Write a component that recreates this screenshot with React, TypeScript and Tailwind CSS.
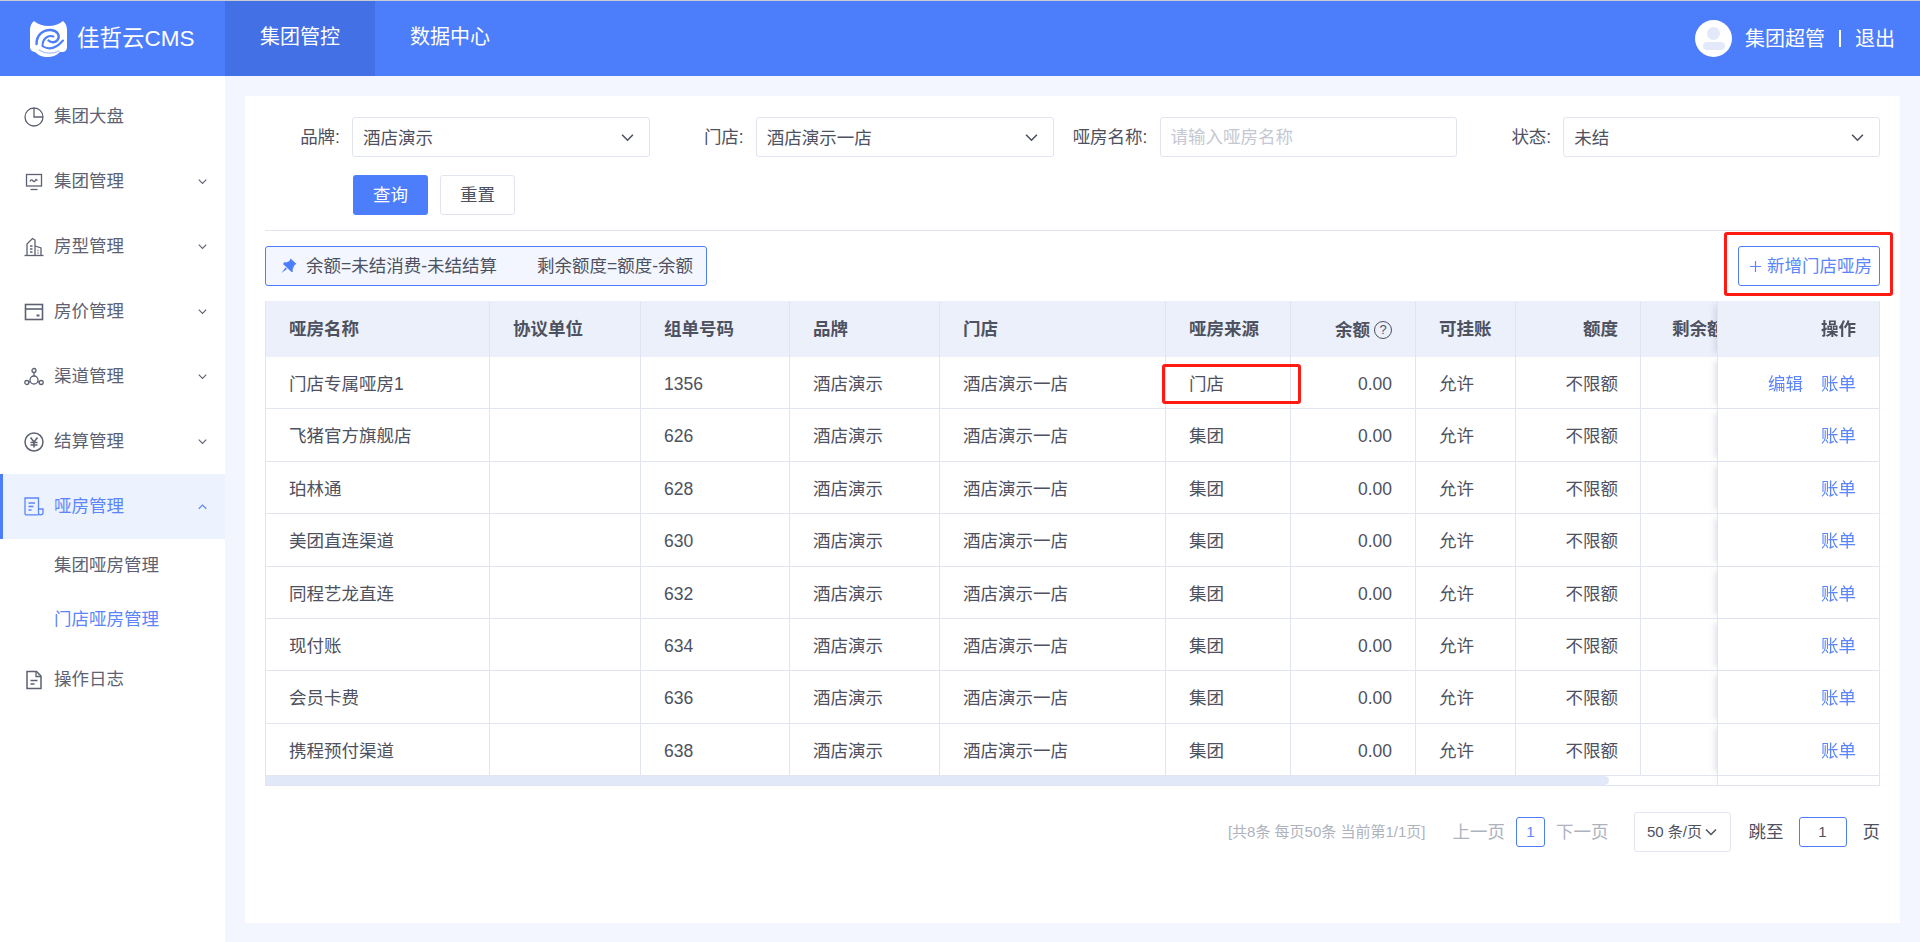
import React from 'react';

const FONT = 'font-["Liberation_Sans","Noto_Sans_CJK_SC",sans-serif]';

const Logo = () => (
  <svg viewBox="0 0 37 37" className="w-[37px] h-[37px] shrink-0">
    <path d="M4 1 C8 4.5 13 6 18.5 6 C24 6 29 4.5 33 1 C35.5 3 37 6 37 10 L37 27 C37 30 35 32 32 32 L30 32 C26 36 22 37 18 37 C12 37 8 35 5 32 C2 31.5 0 30 0 27 L0 10 C0 6 1.5 3 4 1 Z" fill="#fff" />
    <path d="M6.5 24 C6.5 15 13 9.5 21 10 C27.5 10.5 30.5 16 27.5 20 C25.5 22.8 21 23 18.5 20.5" fill="none" stroke="#4c7dfb" strokeWidth="2.4" strokeLinecap="round" />
    <path d="M23.5 16.5 C17.5 14.5 12.5 19 12.5 26" fill="none" stroke="#4c7dfb" strokeWidth="2" strokeLinecap="round" />
    <path d="M13 26.5 C20 30.5 27 27.5 33 20.5" fill="none" stroke="#4c7dfb" strokeWidth="2" strokeLinecap="round" />
    <path d="M9 30 C15 34 23 34 29 31" fill="none" stroke="#a9c1fd" strokeWidth="1.2" strokeLinecap="round" />
  </svg>
);

const stroke = { fill: 'none', stroke: 'currentColor', strokeWidth: 1.3 };

const PieIcon = () => (
  <svg viewBox="0 0 20 20" className="w-5 h-5" {...stroke}>
    <circle cx="10" cy="10" r="9" />
    <path d="M10 1 L10 10 L19 10" />
  </svg>
);
const MonitorIcon = () => (
  <svg viewBox="0 0 20 20" className="w-5 h-5" {...stroke}>
    <rect x="2.5" y="2.5" width="15" height="11.5" />
    <path d="M6 9.5 C7 7.5 8 7.5 9 9 C10 10 11 9.5 12 7.5 L13.5 8.5" />
    <path d="M6.5 17.5 L13.5 17.5" />
  </svg>
);
const BuildingIcon = () => (
  <svg viewBox="0 0 20 20" className="w-5 h-5" {...stroke}>
    <path d="M0.5 18.5 L19.5 18.5" />
    <path d="M3 18.5 L3 7 L8.5 1.5 L11 3 L11 18.5" />
    <path d="M11 9 L17 11 L17 18.5" />
    <path d="M6 9 L8.5 9 M6 12 L8.5 12 M6 15 L8.5 15 M13.5 13.5 L14.5 13.5 M13.5 16 L14.5 16" />
  </svg>
);
const WalletIcon = () => (
  <svg viewBox="0 0 20 20" className="w-5 h-5" {...stroke}>
    <rect x="1.5" y="2.5" width="17" height="15" strokeWidth="1.6" />
    <path d="M1.5 7 L18.5 7" strokeWidth="1.6" />
    <path d="M12.5 13.5 L15.5 13.5" strokeWidth="2" />
  </svg>
);
const NodesIcon = () => (
  <svg viewBox="0 0 20 20" className="w-5 h-5" {...stroke}>
    <circle cx="10" cy="3.5" r="2" />
    <circle cx="2.8" cy="15.5" r="2" />
    <circle cx="17.2" cy="15.5" r="2" />
    <path d="M10 5.5 L10 9 M4.8 15.2 L6.8 14.5 M15.2 15.2 L13.2 14.5" />
    <circle cx="10" cy="13" r="4" />
  </svg>
);
const YenIcon = () => (
  <svg viewBox="0 0 20 20" className="w-5 h-5" {...stroke}>
    <circle cx="10" cy="10" r="9" strokeWidth="1.5" />
    <path d="M6.5 5.5 L10 10 L13.5 5.5 M6.5 10.5 L13.5 10.5 M6.5 13 L13.5 13 M10 10 L10 15.5" strokeWidth="1.6" />
  </svg>
);
const BillIcon = () => (
  <svg viewBox="0 0 20 20" className="w-5 h-5" {...stroke}>
    <path d="M14.5 17.8 L2.5 17.8 C1.5 17.8 1 17.2 1 16.5 L1 1 L14.5 1 L14.5 16 C14.5 17 15 17.8 16.5 17.8 C18 17.8 19 17 19 16 L19 12 L14.5 12" />
    <path d="M4.5 6 L11 6 M4.5 9.5 L9.5 9.5 M4.5 13 L7.5 13" />
  </svg>
);
const DocIcon = () => (
  <svg viewBox="0 0 20 20" className="w-5 h-5" {...stroke}>
    <path d="M3 1.5 L12.5 1.5 L17 6 L17 18.5 L3 18.5 Z" strokeWidth="1.5" />
    <path d="M12 1.5 L12 6.5 L17 6.5 M6.5 10.5 L13.5 10.5 M6.5 14 L10.5 14" />
  </svg>
);

const Chevron = ({ up, className }: { up?: boolean; className: string }) => (
  <svg viewBox="0 0 12 8" className={className} fill="none" stroke="currentColor" strokeWidth="1.5">
    <path d={up ? 'M1 7 L6 2 L11 7' : 'M1 1.5 L6 6.5 L11 1.5'} />
  </svg>
);

const PinIcon = () => (
  <svg viewBox="0 0 16 16" className="w-4 h-4 shrink-0 text-[#4c7dfb]" fill="currentColor">
    <path d="M9.5 0.5 L15.5 6 L13.5 7 L11.5 11.5 L12 13.5 L10.5 14 L2 6 L3.5 4 L5 4.5 L8.5 3 Z" />
    <path d="M4.5 9.5 L0.5 15 L6 11 Z" />
  </svg>
);

const menu = [
  { label: '集团大盘', Icon: PieIcon, arrow: false },
  { label: '集团管理', Icon: MonitorIcon, arrow: true },
  { label: '房型管理', Icon: BuildingIcon, arrow: true },
  { label: '房价管理', Icon: WalletIcon, arrow: true },
  { label: '渠道管理', Icon: NodesIcon, arrow: true },
  { label: '结算管理', Icon: YenIcon, arrow: true },
];

const rows = [
  ['门店专属哑房1', '1356', '门店'],
  ['飞猪官方旗舰店', '626', '集团'],
  ['珀林通', '628', '集团'],
  ['美团直连渠道', '630', '集团'],
  ['同程艺龙直连', '632', '集团'],
  ['现付账', '634', '集团'],
  ['会员卡费', '636', '集团'],
  ['携程预付渠道', '638', '集团'],
];

const Field = ({ label, children, last }: { label: string; children: React.ReactNode; last?: boolean }) => (
  <div className={`flex items-center ${last ? '' : 'pr-[19px]'}`}>
    <label className="w-[87px] shrink-0 pr-[12px] text-right text-[17.5px] whitespace-nowrap">{label}</label>
    {children}
  </div>
);

const SelectBox = ({ value }: { value: string }) => (
  <div className="flex-1 h-10 border border-[#e1e5f2] rounded-[3px] flex items-center justify-between pl-[10px] pr-[15px]">
    <span className="text-[17.5px] leading-none pt-1">{value}</span>
    <Chevron className="w-[13px] h-[9px] text-[#4d5160]" />
  </div>
);

const th = 'h-[56px] bg-[#ebf0fb] font-bold border-r border-[#e1e5f2] px-[23px] whitespace-nowrap overflow-hidden';
const td = 'h-[52.4px] border-r border-b border-[#e1e5f2] px-[23px] pt-[3px] whitespace-nowrap';

export default function App() {
  return (
    <div className={`${FONT} h-[942px] overflow-hidden bg-[#f3f6fe] text-[#4d5160] flex flex-col`}>
      <header className="h-[76px] shrink-0 bg-[#4c7dfb] border-t border-[#c9ccd4] flex items-stretch text-white">
        <div className="w-[225px] flex items-center pl-[30px] gap-[10px]">
          <Logo />
          <span className="text-[22.5px] whitespace-nowrap">佳哲云CMS</span>
        </div>
        <div className="w-[150px] bg-[#4370e4] flex items-center justify-center text-[20px] pb-1">集团管控</div>
        <div className="w-[150px] flex items-center justify-center text-[20px] pb-1">数据中心</div>
        <div className="ml-auto flex items-center pr-[25px] text-[20px]">
          <div className="w-[37px] h-[37px] rounded-full bg-white flex flex-col items-center justify-center gap-[2px] mr-[13px]">
            <div className="w-[13px] h-[13px] rounded-full bg-[#e3e9fb]" />
            <div className="w-[22px] h-[8px] rounded-full bg-[#e3e9fb]" />
          </div>
          <span>集团超管</span>
          <span className="w-[2px] h-[17px] bg-white mx-[14px]" />
          <span>退出</span>
        </div>
      </header>

      <div className="flex-1 flex min-h-0">
        <aside className="w-[225px] shrink-0 bg-white pt-2 text-[17.5px] text-[#5d6272]">
          {menu.map(({ label, Icon, arrow }) => (
            <div key={label} className="h-[65px] flex items-center pl-6 pr-[18px]">
              <Icon />
              <span className="ml-[10px]">{label}</span>
              {arrow && <Chevron className="ml-auto w-[9px] h-[7px]" />}
            </div>
          ))}
          <div className="h-[65px] flex items-center pl-[21px] pr-[18px] border-l-[3px] border-[#4c7dfb] bg-[#ecf2fe] text-[#5c85fa]">
            <BillIcon />
            <span className="ml-[10px]">哑房管理</span>
            <Chevron up className="ml-auto w-[9px] h-[7px]" />
          </div>
          <div className="pb-0.5">
            <div className="h-[53px] flex items-center pl-[54px]">集团哑房管理</div>
            <div className="h-[53px] flex items-center pl-[54px] pt-[2px] text-[#5c85fa]">门店哑房管理</div>
          </div>
          <div className="h-[65px] flex items-center pl-6">
            <DocIcon />
            <span className="ml-[10px]">操作日志</span>
          </div>
        </aside>

        <main className="flex-1 min-w-0 pl-5 pr-5 pt-5 pb-[19px]">
          <div className="relative h-full bg-white px-5 pt-[21px]">
            <div className="grid grid-cols-4">
              <Field label="品牌:"><SelectBox value="酒店演示" /></Field>
              <Field label="门店:"><SelectBox value="酒店演示一店" /></Field>
              <Field label="哑房名称:">
                <div className="flex-1 h-10 border border-[#e1e5f2] rounded-[3px] flex items-center pl-[10px] text-[17.5px] text-[#c5c8d2]">请输入哑房名称</div>
              </Field>
              <Field label="状态:" last><SelectBox value="未结" /></Field>
            </div>

            <div className="flex gap-3 pl-[88px] mt-[18px] pb-[15px] border-b border-[#e1e5f2] text-[17.5px]">
              <button className="w-[75px] h-10 rounded-[3px] bg-[#4c7dfb] text-white">查询</button>
              <button className="w-[75px] h-10 rounded-[3px] border border-[#e1e5f2]">重置</button>
            </div>

            <div className="flex justify-between mt-[15px] text-[17.5px]">
              <div className="h-10 w-[442px] border border-[#4c7dfb] rounded-[3px] bg-[#f3f6fe] flex items-center pl-[15px] whitespace-nowrap">
                <PinIcon />
                <span className="ml-[9px]">余额=未结消费-未结结算</span>
                <span className="ml-[40px]">剩余额度=额度-余额</span>
              </div>
              <button className="relative h-10 w-[142px] border border-[#4c7dfb] rounded-[3px] text-[#5c85fa] whitespace-nowrap flex items-center pl-[11px] gap-[6px]">
                <svg viewBox="0 0 11 11" className="w-[11px] h-[11px]" fill="none" stroke="currentColor" strokeWidth="1.2">
                  <path d="M5.5 0 L5.5 11 M0 5.5 L11 5.5" />
                </svg>
                新增门店哑房
                <span className="absolute -left-[15px] -right-[14px] -top-[15px] -bottom-[11px] border-[3px] border-[#ff1a12] rounded-[3px]" />
              </button>
            </div>

            <div className="relative mt-[15px] overflow-hidden border-l border-r border-b border-[#e1e5f2] text-[17.5px]">
              <table className="table-fixed w-[1942px] border-separate border-spacing-0">
                <colgroup>
                  <col className="w-[224px]" />
                  <col className="w-[151px]" />
                  <col className="w-[149px]" />
                  <col className="w-[150px]" />
                  <col className="w-[226px]" />
                  <col className="w-[125px]" />
                  <col className="w-[125px]" />
                  <col className="w-[100px]" />
                  <col className="w-[125px]" />
                  <col className="w-[125px]" />
                  <col className="w-[380px]" />
                  <col className="w-[162px]" />
                </colgroup>
                <thead>
                  <tr>
                    <th className={`${th} text-left`}>哑房名称</th>
                    <th className={`${th} text-left`}>协议单位</th>
                    <th className={`${th} text-left`}>组单号码</th>
                    <th className={`${th} text-left`}>品牌</th>
                    <th className={`${th} text-left`}>门店</th>
                    <th className={`${th} text-left`}>哑房来源</th>
                    <th className={`${th} text-right`}>
                      <span className="inline-flex items-center gap-1 align-middle">
                        余额
                        <span className="w-[18px] h-[18px] rounded-full border border-[#4d5160] text-[13px] leading-none font-normal flex items-center justify-center">?</span>
                      </span>
                    </th>
                    <th className={`${th} text-left`}>可挂账</th>
                    <th className={`${th} text-right !pr-[22px]`}>额度</th>
                    <th className={`${th} text-right`}>剩余额度</th>
                    <th className={th} />
                    <th className={`${th} text-right sticky right-0 border-r-0 border-l border-[#e1e5f2] shadow-[-6px_0_6px_-4px_rgba(80,90,120,0.18)]`}>操作</th>
                  </tr>
                </thead>
                <tbody>
                  {rows.map(([name, no, source], i) => (
                    <tr key={no}>
                      <td className={td}>{name}</td>
                      <td className={td} />
                      <td className={td}>{no}</td>
                      <td className={td}>酒店演示</td>
                      <td className={td}>酒店演示一店</td>
                      <td className={td}>{source}</td>
                      <td className={`${td} text-right`}>0.00</td>
                      <td className={td}>允许</td>
                      <td className={`${td} text-right !pr-[22px]`}>不限额</td>
                      <td className={td} />
                      <td className={td} />
                      <td className={`${td} sticky right-0 bg-white border-r-0 border-l text-right text-[#5c85fa] shadow-[-6px_0_6px_-4px_rgba(80,90,120,0.18)]`}>
                        {i === 0 && <span className="mr-[18px]">编辑</span>}
                        账单
                      </td>
                    </tr>
                  ))}
                </tbody>
              </table>
              <div className="h-[9px] relative">
                <div className="h-full w-[1343px] bg-[#e1e8f7] rounded-r-[5px]" />
                <div className="absolute right-0 top-0 bottom-0 w-[162px] bg-white border-l border-[#e1e5f2] shadow-[-6px_0_6px_-4px_rgba(80,90,120,0.18)]" />
              </div>
              <div className="absolute left-[896px] top-[63px] w-[139px] h-[40px] border-[3px] border-[#ff1a12] rounded-[3px]" />
            </div>

            <div className="flex items-center justify-end mt-[26px] text-[17.5px]">
              <span className="text-[15px] text-[#aeb2bd]">[共8条 每页50条 当前第1/1页]</span>
              <span className="ml-[27px] text-[#aeb2bd]">上一页</span>
              <span className="ml-[11px] w-[29px] h-[30px] border border-[#4c7dfb] rounded-[3px] text-[#5c85fa] flex items-center justify-center text-[15px]">1</span>
              <span className="ml-[11px] text-[#aeb2bd]">下一页</span>
              <div className="ml-[25px] w-[97px] h-10 border border-[#e1e5f2] rounded-[3px] flex items-center justify-center gap-[3px] text-[15px] whitespace-nowrap">
                50 条/页
                <Chevron className="w-[12px] h-[8px]" />
              </div>
              <span className="ml-[18px]">跳至</span>
              <span className="ml-[15px] w-[48px] h-[30px] border border-[#4c7dfb] rounded-[3px] flex items-center justify-center text-[15px]">1</span>
              <span className="ml-[16px]">页</span>
            </div>
          </div>
        </main>
      </div>
    </div>
  );
}
